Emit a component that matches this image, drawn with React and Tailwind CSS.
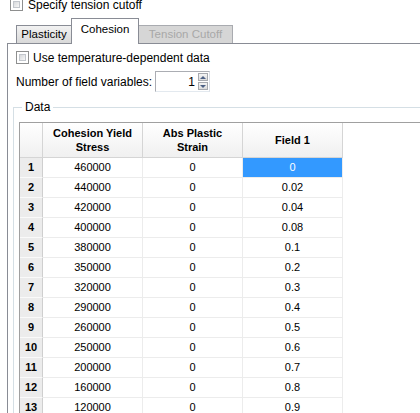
import React from "react";

const rows = [
  ["460000", "0", "0"],
  ["440000", "0", "0.02"],
  ["420000", "0", "0.04"],
  ["400000", "0", "0.08"],
  ["380000", "0", "0.1"],
  ["350000", "0", "0.2"],
  ["320000", "0", "0.3"],
  ["290000", "0", "0.4"],
  ["260000", "0", "0.5"],
  ["250000", "0", "0.6"],
  ["200000", "0", "0.7"],
  ["160000", "0", "0.8"],
  ["120000", "0", "0.9"],
];

const CheckBox = () => (
  <div className="w-[13px] h-[13px] border border-[#8e8f8f] bg-white p-[2px] shrink-0">
    <div className="w-full h-full border border-[#c2c6cc] bg-gradient-to-br from-[#d7d9dc] to-[#f7f7f7]" />
  </div>
);

const Spinner = () => (
  <div className="flex items-center w-[55px] h-[21px] border border-[#abadb3] border-r-[#dbdfe6] border-b-[#e3e9ef] bg-white">
    <span className="flex-1 text-right pr-[3px] leading-none">1</span>
    <div className="flex flex-col gap-[1px] pr-[1px]">
      <div className="w-[10px] h-[8px] border border-[#a6a9af] bg-gradient-to-b from-[#f4f4f4] to-[#dcdcdc] flex items-center justify-center">
        <div className="w-0 h-0 border-l-[3px] border-r-[3px] border-b-[3px] border-l-transparent border-r-transparent border-b-[#4d6185]" />
      </div>
      <div className="w-[10px] h-[8px] border border-[#a6a9af] bg-gradient-to-b from-[#f4f4f4] to-[#dcdcdc] flex items-center justify-center">
        <div className="w-0 h-0 border-l-[3px] border-r-[3px] border-t-[3px] border-l-transparent border-r-transparent border-t-[#4d6185]" />
      </div>
    </div>
  </div>
);

export default function App() {
  return (
    <div className="w-[420px] h-[413px] overflow-hidden bg-white text-black text-[12px] font-['Liberation_Sans',Arial,sans-serif]">
      {/* top option */}
      <div className="flex items-center gap-[5px] pl-[10px] h-[13px] mt-[-2px]">
        <CheckBox />
        <span className="leading-none">Specify tension cutoff</span>
      </div>

      {/* tabs */}
      <div className="flex items-end pl-[16px] h-[25px] mt-[7px]">
        <div className="w-[56px] h-[18px] border border-b-0 border-[#898c95] bg-gradient-to-b from-[#f2f2f2] to-[#d9d9d9] flex items-center justify-center text-[11.5px]">
          Plasticity
        </div>
        <div className="relative z-10 -ml-px w-[68px] h-[26px] -mb-px border border-b-0 border-[#898c95] bg-white flex items-center justify-center text-[11.5px] pb-[3px]">
          Cohesion
        </div>
        <div className="-ml-px w-[95px] h-[18px] border border-b-0 border-[#a9abb0] bg-[#d6d6d6] flex items-center justify-center text-[11.5px] text-[#a8a8a8]">
          Tension Cutoff
        </div>
      </div>

      {/* panel */}
      <div className="ml-[7px] border-t border-l border-[#898c95] bg-white pl-[8px] pt-[7px] h-[400px]">
        <div className="flex items-center gap-[4px] h-[13px]">
          <CheckBox />
          <span className="leading-none">Use temperature-dependent data</span>
        </div>
        <div className="flex items-center mt-[7px] h-[21px]">
          <span className="w-[139px] leading-none">Number of field variables:</span>
          <Spinner />
        </div>

        <fieldset className="-ml-[3px] mt-[8px] border-t border-l border-[#d5dfe5] h-[320px]">
          <legend className="ml-[8px] px-[3px] leading-[14px]">Data</legend>
          <div className="ml-[5px] mt-[8px] border-t border-l border-[#a0a0a0] bg-white text-[11px]">
            {/* header */}
            <div className="flex h-[35px]">
              <div className="w-[23px] border-r border-b border-[#d5d5d5] bg-gradient-to-b from-white to-[#f0f0f0]" />
              {[
                ["Cohesion Yield", "Stress"],
                ["Abs Plastic", "Strain"],
                ["Field 1"],
              ].map((h, i) => (
                <div
                  key={i}
                  className="w-[100px] border-r border-b border-[#d5d5d5] bg-gradient-to-b from-white to-[#f0f0f0] flex flex-col items-center justify-center font-bold leading-[14px]"
                >
                  {h.map((l) => (
                    <span key={l}>{l}</span>
                  ))}
                </div>
              ))}
            </div>
            {/* rows */}
            {rows.map((r, i) => (
              <div key={i} className="flex h-[20px]">
                <div className="w-[23px] border-r border-b border-r-[#cfcfcf] border-b-[#fafafa] bg-[#ececec] flex items-center justify-center font-bold">
                  {i + 1}
                </div>
                <div className="w-[100px] border-r border-b border-[#ececec] flex items-center justify-center">
                  {r[0]}
                </div>
                <div className="w-[100px] border-r border-b border-[#ececec] flex items-center justify-center">
                  {r[1]}
                </div>
                <div
                  className={
                    i === 0
                      ? "w-[100px] border-r border-b border-[#ececec] flex items-center justify-center bg-[#3399ff] text-white"
                      : "w-[100px] border-r border-b border-[#ececec] flex items-center justify-center"
                  }
                >
                  {r[2]}
                </div>
              </div>
            ))}
          </div>
        </fieldset>
      </div>
    </div>
  );
}
